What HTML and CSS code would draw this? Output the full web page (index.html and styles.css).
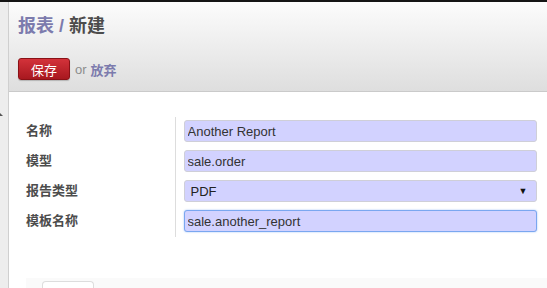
FILE: index.html
```html
<!DOCTYPE html>
<html lang="zh">
<head>
  <meta charset="UTF-8">
  <title>报表 / 新建</title>
  <link rel="stylesheet" href="styles.css">
</head>
<body>
  <div class="topbar"></div>
  <div class="page">
    <div class="sidebar"><span class="toggle"></span></div>
    <div class="main">
      <div class="header">
        <h1><a class="crumb">报表</a> <span class="sep">/</span> 新建</h1>
        <div class="buttons">
          <button class="btn-save">保存</button>
          <span class="or">or</span>
          <a class="discard">放弃</a>
        </div>
      </div>
      <div class="sheet">
        <table class="form">
          <tr>
            <td class="label">名称</td>
            <td class="field"><input type="text" value="Another Report"></td>
          </tr>
          <tr>
            <td class="label">模型</td>
            <td class="field"><input type="text" value="sale.order"></td>
          </tr>
          <tr>
            <td class="label">报告类型</td>
            <td class="field"><div class="select">PDF<span class="arrow">&#9660;</span></div></td>
          </tr>
          <tr>
            <td class="label">模板名称</td>
            <td class="field"><input type="text" class="focused" value="sale.another_report"></td>
          </tr>
        </table>
        <div class="footer">
          <div class="tab"></div>
        </div>
      </div>
    </div>
  </div>
</body>
</html>
```

FILE: styles.css
```css
* {
  box-sizing: border-box;
}

body {
  margin: 0;
  font-family: Arial, "Liberation Sans", "Noto Sans CJK SC", sans-serif;
  font-size: 13px;
  color: #4c4c4c;
  background-color: #fff;
  height: 288px;
  overflow: hidden;
}

.topbar {
  height: 2px;
  background-color: #151515;
}

.page {
  display: flex;
  height: 286px;
}

.sidebar {
  width: 9px;
  background-color: #ededed;
  border-right: 1px solid #cfcfcf;
  position: relative;
}

.toggle {
  position: absolute;
  left: 0;
  top: 111px;
  width: 0;
  height: 0;
  border-bottom: 3px solid #555;
  border-right: 3px solid transparent;
}

.main {
  flex: 1;
}

.header {
  height: 90px;
  padding: 12px 9px 0;
  background: linear-gradient(#fcfcfc, #dedede);
  border-bottom: 1px solid #cacaca;
}

h1 {
  margin: 0;
  font-size: 18px;
  font-weight: bold;
  line-height: 24px;
  color: #4c4c4c;
}

.crumb,
.sep {
  color: #7c7bad;
}

.buttons {
  display: flex;
  align-items: center;
  margin-top: 20px;
}

.btn-save {
  width: 52px;
  height: 22px;
  padding: 0;
  font-family: inherit;
  font-size: 13px;
  color: #fff;
  background: linear-gradient(#d3323a, #a8181f);
  border: 1px solid #8a1116;
  border-radius: 3px;
  box-shadow: 0 1px 1px rgba(0, 0, 0, 0.2);
}

.or {
  margin-left: 5px;
  color: #8c8c8c;
}

.discard {
  margin-left: 4px;
  color: #7c7bad;
  font-weight: bold;
}

.sheet {
  padding: 25px 0 0 17px;
}

.form {
  border-collapse: collapse;
  width: 520px;
}

.form td {
  padding: 0;
}

.label {
  width: 149px;
  height: 30px;
  vertical-align: top;
  padding-top: 3px !important;
  font-weight: bold;
  color: #4c4c4c;
  border-right: 1px solid #ddd;
}

.field {
  padding: 3px 0 5px 8px !important;
}

.field input,
.select {
  display: block;
  width: 353px;
  height: 22px;
  padding: 0 3px;
  font-family: inherit;
  font-size: 13px;
  color: #333;
  background-color: #d2d2ff;
  border: 1px solid #cfcfd8;
  border-radius: 3px;
  outline: none;
}

.select {
  display: flex;
  align-items: center;
  justify-content: space-between;
  padding: 0 8px 0 6px;
  color: #222;
}

.arrow {
  font-size: 9px;
  color: #111;
}

.field input.focused {
  border: 1px solid #7aa7f0;
  box-shadow: 0 0 2px #9ebff5;
}

.footer {
  margin-top: 41px;
  margin-left: 0;
  height: 20px;
  background-color: #fafafa;
  padding: 3px 0 0 16px;
}

.tab {
  width: 52px;
  height: 20px;
  background-color: #fff;
  border: 1px solid #ddd;
  border-bottom: none;
  border-radius: 4px 4px 0 0;
}
```
